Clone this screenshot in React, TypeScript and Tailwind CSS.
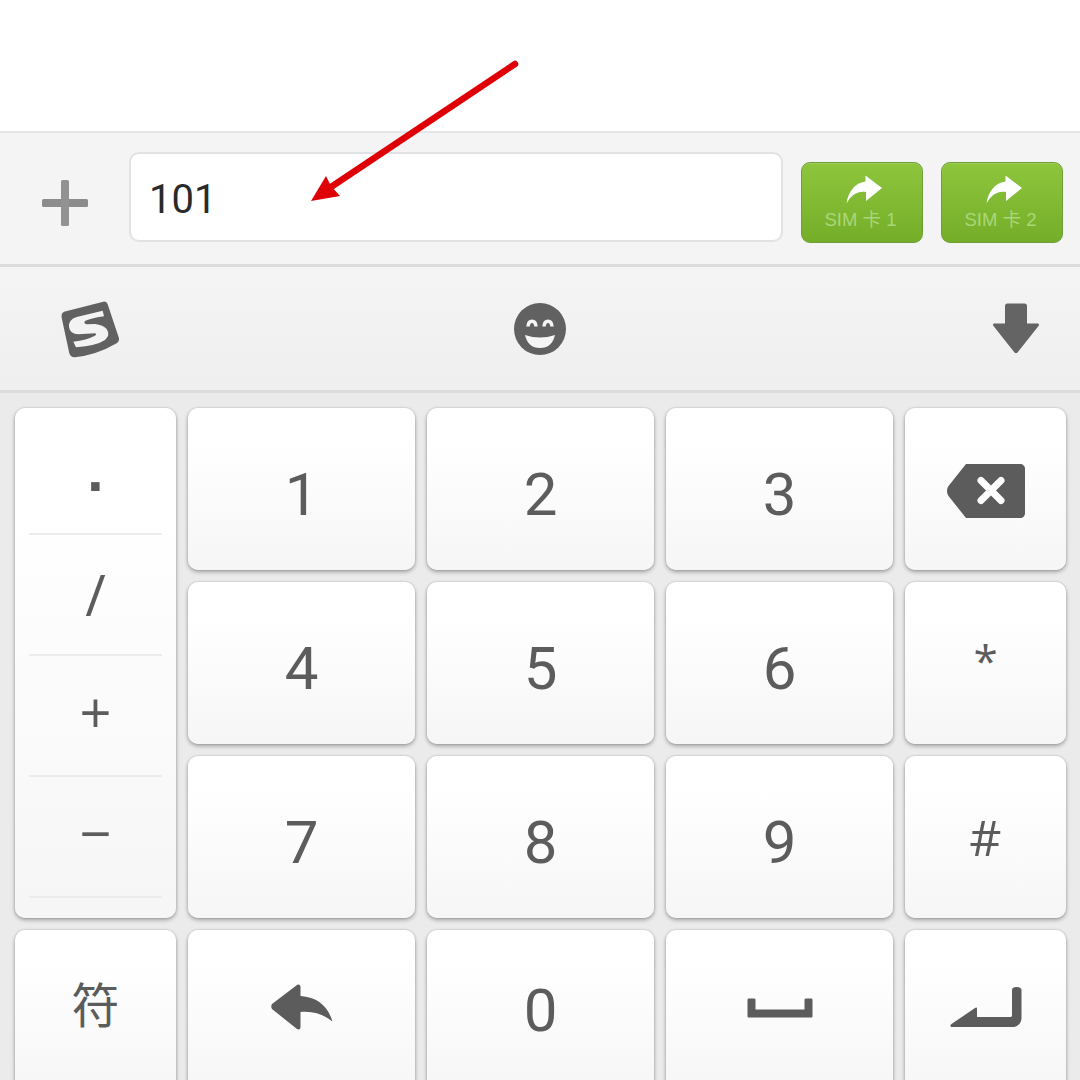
const KEY =
  'flex items-center justify-center rounded-[10px] bg-gradient-to-b from-white from-20% to-[#f6f6f6] text-[#5c5c5c] shadow-[0_2px_4px_rgba(0,0,0,0.32),0_0_2px_rgba(0,0,0,0.2)]';

function ShareIcon() {
  return (
    <svg width="37" height="29" viewBox="0 0 37 29" className="ml-[5px]">
      <path d="M0.500 28.500C2 18 8 8 19.500 6.500L19.500 0.500L36 13L20 26L20 17C12 15.500 5 20 0.500 28.500Z" fill="#ffffff" />
    </svg>
  );
}

function SimButton({ n }: { n: number }) {
  return (
    <div className="flex h-[81px] w-[122px] flex-col items-center rounded-[9px] border border-[#6f9e39] bg-gradient-to-b from-[#8ec53d] to-[#74ae28] pt-[12px] shadow-[inset_0_1px_0_rgba(255,255,255,0.15)]">
      <ShareIcon />
      <span className='mt-[4px] mr-[3px] text-[18.500px] leading-[24px] text-[#aad77a] font-["Liberation_Sans","Noto_Sans_CJK_SC",sans-serif]'>
        SIM 卡 {n}
      </span>
    </div>
  );
}

function SogouLogo() {
  return (
    <svg width="60" height="58" viewBox="60 25 180 174" className="ml-[20px]">
      <path
        d="M72 60L190 30Q200 28 203 38L237 140Q238 150 230 155Q170 190 105 197Q92 198 88 185L65 78Q63 65 72 60Z"
        fill="#616161"
      />
      <path
        d="M188 57L110 76Q85 84 87 106Q90 128 115 128L165 125Q172 127 165 132Q140 145 100 150L108 167Q170 162 195 145Q212 130 200 112Q190 100 165 97L140 98Q130 96 135 88Q150 80 192 74Z"
        fill="#f3f3f3"
      />
    </svg>
  );
}

function SmileIcon() {
  return (
    <svg width="54" height="54" viewBox="0 0 54 54">
      <circle cx="27" cy="27" r="26" fill="#616161" />
      <path d="M15 24.500C15.500 17.500 22.500 17.500 23 24.500" fill="none" stroke="#f5f5f5" strokeWidth="3.500" />
      <path d="M31 24.500C31.500 17.500 38.500 17.500 39 24.500" fill="none" stroke="#f5f5f5" strokeWidth="3.500" />
      <path d="M12 33Q27 38 42 33Q39 46 27 46Q15 46 12 33Z" fill="#f5f5f5" />
    </svg>
  );
}

function DownIcon() {
  return (
    <svg width="48" height="52" viewBox="0 0 48 52">
      <path
        d="M13 3C13 1.500 14 0.500 15.500 0.500H32.500C34 0.500 35 1.500 35 3V20.500H45.500C47 20.500 47.500 22 46.500 23L25.500 49.500C24.500 50.500 23.500 50.500 22.500 49.500L1.500 23C0.500 22 1 20.500 2.500 20.500H13Z"
        fill="#646464"
      />
    </svg>
  );
}

function BackspaceIcon() {
  return (
    <svg width="80" height="56" viewBox="0 0 80 56" className="mt-[4px]">
      <path d="M20 1H74C77 1 79 3 79 6V50C79 53 77 55 74 55H20L2.500 33C0.500 30 0.500 26 2.500 23Z" fill="#5c5c5c" />
      <path d="M35 17.500L55 37.500M55 17.500L35 37.500" stroke="#ffffff" strokeWidth="7" strokeLinecap="round" />
    </svg>
  );
}

function ReplyIcon() {
  return (
    <svg width="62" height="46" viewBox="0 0 62 46" className="-mt-[8px]">
      <path
        d="M1 20L26 1C28 0 29.500 1 29.500 3V12C46 13 57 22 61.500 37.500C52 30 42 27 29.500 28V43C29.500 45.500 28 46 26 45L1 25C0 23.500 0 21.500 1 20Z"
        fill="#5c5c5c"
      />
    </svg>
  );
}

function SpaceIcon() {
  return (
    <svg width="66" height="20" viewBox="0 0 66 20" className="-mt-[6px]">
      <path
        d="M0.500 2C0.500 1 1 0.500 2 0.500H7C8 0.500 8.500 1 8.500 2V11.500H57.500V2C57.500 1 58 0.500 59 0.500H64C65 0.500 65.500 1 65.500 2V18C65.500 19 65 19.500 64 19.500H2C1 19.500 0.500 19 0.500 18Z"
        fill="#5c5c5c"
      />
    </svg>
  );
}

function EnterIcon() {
  return (
    <svg width="72" height="41" viewBox="0 0 72 41" className="-mt-[8px]">
      <path
        d="M62 3C62 1 63.500 0 66.500 0C69.500 0 71.500 1 71.500 3V31C71.500 36 67.500 40 63 40H2C0 40 0 38 1.500 37L25 21C26.500 20 27 20.500 27 22V30H60C61.500 30 62 29.500 62 28Z"
        fill="#5c5c5c"
      />
    </svg>
  );
}

function Digit({ value, low = true }: { value: string; low?: boolean }) {
  return (
    <div className={KEY}>
      <span
        className={
          low
            ? 'mt-[12px] font-["Roboto",sans-serif] text-[60px] leading-none'
            : 'font-["Roboto",sans-serif] text-[60px] leading-none'
        }
      >
        {value}
      </span>
    </div>
  );
}

function SideKey({ value, className }: { value: string; className: string }) {
  return (
    <div className={KEY}>
      <span className={className}>{value}</span>
    </div>
  );
}

function Column() {
  const symbols = [
    { label: '·', cls: 'mt-[24px] ml-[3px] font-["Liberation_Sans"] text-[60px] font-bold' },
    { label: '/', cls: '-mt-[2px] text-[56px]' },
    { label: '+', cls: '-mt-[10px] text-[56px]' },
    { label: '−', cls: '-mt-[10px] text-[56px]' },
  ];
  return (
    <div className={`${KEY} row-span-3 !items-stretch !justify-start flex-col pt-[6px]`}>
      {symbols.map((s) => (
        <div key={s.label} className="flex h-[121px] flex-col">
          <div className="flex flex-1 items-center justify-center leading-none">
            <span className={s.cls}>{s.label}</span>
          </div>
          <div className="mx-[14px] h-[2px] bg-[#ececec]" />
        </div>
      ))}
    </div>
  );
}

export default function App() {
  return (
    <div className='relative h-[1080px] w-[1080px] overflow-hidden bg-white font-["Open_Sans","Noto_Sans_CJK_SC",sans-serif]'>
      <div className="h-[131px]" />

      {/* input row */}
      <div className="flex h-[136px] items-start border-t-2 border-b-[3px] border-t-[#e6e6e6] border-b-[#dcdcdc] bg-[#f4f4f4]">
        <div className="flex h-full w-[129px] items-center justify-center">
          <svg width="46" height="46" viewBox="0 0 46 46" className="mt-[8px]">
            <rect x="0" y="19" width="46" height="8" rx="1.500" fill="#8c8c8c" />
            <rect x="19" y="0" width="8" height="46" rx="1.500" fill="#929292" />
          </svg>
        </div>
        <div className='mt-[19px] flex h-[90px] w-[654px] items-center rounded-[10px] border-2 border-[#e2e2e2] bg-white pt-[5px] pl-[18px] text-[40px] text-[#2a2a2a] font-["Roboto",sans-serif]'>
          101
        </div>
        <div className="mt-[29px] ml-[18px] flex gap-[18px]">
          <SimButton n={1} />
          <SimButton n={2} />
        </div>
      </div>

      {/* toolbar */}
      <div className="grid h-[126px] grid-cols-3 items-center border-b-[3px] border-b-[#dcdcdc] bg-gradient-to-b from-[#f4f4f4] to-[#efefef] px-[40px]">
        <div className="justify-self-start">
          <SogouLogo />
        </div>
        <div className="justify-self-center">
          <SmileIcon />
        </div>
        <div className="justify-self-end">
          <DownIcon />
        </div>
      </div>

      {/* keyboard */}
      <div className="grid h-[700px] grid-cols-[161px_227px_227px_227px_161px] grid-rows-[162px_162px_162px_162px] gap-[12px] bg-[#ebebeb] px-[15px] pt-[15px]">
        <Column />
        <Digit value="1" />
        <Digit value="2" />
        <Digit value="3" />
        <div className={KEY}>
          <BackspaceIcon />
        </div>
        <Digit value="4" />
        <Digit value="5" />
        <Digit value="6" />
        <SideKey value="*" className="-mt-[6px] text-[44px] leading-none" />
        <Digit value="7" />
        <Digit value="8" />
        <Digit value="9" />
        <SideKey value="#" className="text-[50px] leading-none" />
        <SideKey value="符" className="-mt-[12px] text-[48px] leading-none" />
        <div className={KEY}>
          <ReplyIcon />
        </div>
        <Digit value="0" low={false} />
        <div className={KEY}>
          <SpaceIcon />
        </div>
        <div className={KEY}>
          <EnterIcon />
        </div>
      </div>

      {/* red annotation arrow over the screenshot */}
      <svg className="pointer-events-none absolute inset-0" width="1080" height="1080" viewBox="0 0 1080 1080">
        <line x1="515" y1="64" x2="331" y2="187" stroke="#df0007" strokeWidth="6.500" strokeLinecap="round" />
        <path d="M311 201L326 176L331 186L340 196Z" fill="#df0007" />
      </svg>
    </div>
  );
}
